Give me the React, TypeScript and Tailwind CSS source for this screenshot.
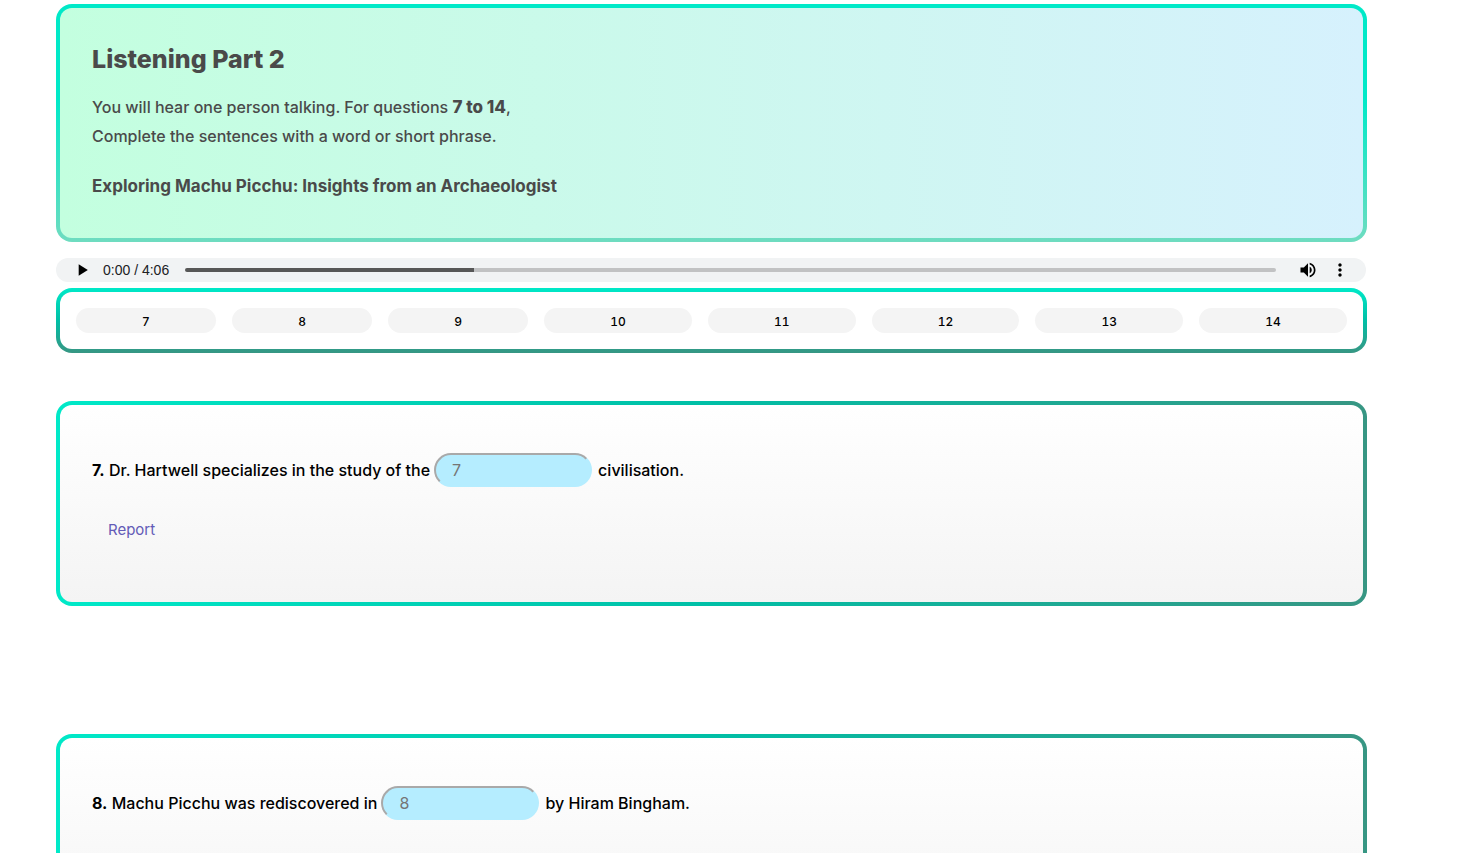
interface Question {
    number: number;
    before: string;
    after: string;
}

const QUESTION_NUMBERS = [7, 8, 9, 10, 11, 12, 13, 14];

const QUESTIONS: Question[] = [
    { number: 7, before: 'Dr. Hartwell specializes in the study of the', after: 'civilisation.' },
    { number: 8, before: 'Machu Picchu was rediscovered in', after: 'by Hiram Bingham.' },
];

function IntroPanel() {
    return (
        <header className="rounded-2xl border-4 border-transparent px-8 pt-[33px] pb-[37px] text-[#4a4a4a] [background:linear-gradient(90deg,#c3ffdf,#d6f1fd)_padding-box,linear-gradient(180deg,#00e9c8_40%,#6fdcc0_100%)_border-box]">
            <h1 className="text-[25px] leading-9 font-extrabold">Listening Part 2</h1>
            <p className="mt-4 leading-[29px] font-medium">
                You will hear one person talking. For questions{' '}
                <strong className="text-[17px] font-extrabold">7 to 14</strong>,
                <br />
                Complete the sentences with a word or short phrase.
            </p>
            <h2 className="mt-[21px] text-[17px] leading-[29px] font-bold">
                Exploring Machu Picchu: Insights from an Archaeologist
            </h2>
        </header>
    );
}

function AudioPlayer() {
    return (
        <div className="mt-4 mr-px flex h-6 items-center rounded-full bg-[#f1f3f4] px-4 font-['Liberation_Sans',sans-serif]">
            <button type="button" aria-label="Play" className="flex size-5 items-center justify-center">
                <svg viewBox="0 0 24 24" className="size-5" fill="#000">
                    <path d="M8 5v14l11-7z" />
                </svg>
            </button>
            <span className="ml-[11px] text-sm text-[#202124]">0:00 / 4:06</span>
            <input
                type="range"
                aria-label="Seek"
                min={0}
                max={246}
                defaultValue={0}
                className="ml-4 h-1 min-w-0 flex-1 appearance-none rounded-full bg-[linear-gradient(90deg,#575757_26.5%,#c1c2c3_26.5%)] [&::-webkit-slider-thumb]:appearance-none"
            />
            <button type="button" aria-label="Mute" className="ml-[22px] flex size-5 items-center justify-center">
                <svg viewBox="0 0 24 24" className="size-5" fill="#000">
                    <path d="M3 9v6h4l5 5V4L7 9H3zm13.5 3c0-1.77-1.02-3.29-2.5-4.03v8.05c1.48-.73 2.5-2.25 2.5-4.02zM14 3.23v2.06c2.89.86 5 3.54 5 6.71s-2.11 5.85-5 6.71v2.06c4.01-.91 7-4.49 7-8.77s-2.99-7.86-7-8.77z" />
                </svg>
            </button>
            <button type="button" aria-label="More options" className="ml-3 flex size-5 items-center justify-center">
                <svg viewBox="0 0 24 24" className="size-5" fill="#000">
                    <path d="M12 8c1.1 0 2-.9 2-2s-.9-2-2-2-2 .9-2 2 .9 2 2 2zm0 2c-1.1 0-2 .9-2 2s.9 2 2 2 2-.9 2-2-.9-2-2-2zm0 6c-1.1 0-2 .9-2 2s.9 2 2 2 2-.9 2-2-.9-2-2-2z" />
                </svg>
            </button>
        </div>
    );
}

function QuestionNav() {
    return (
        <nav className="mt-[6px] flex gap-4 rounded-2xl border-4 border-transparent p-4 [background:linear-gradient(#fff,#fff)_padding-box,linear-gradient(180deg,#00e9c8,#00bfa6_50%,#379683)_border-box]">
            {QUESTION_NUMBERS.map((number) => (
                <button
                    key={number}
                    type="button"
                    className="h-[25px] flex-auto rounded-full bg-[#f4f4f4] pt-[2px] text-xs font-medium text-black tabular-nums"
                >
                    {number}
                </button>
            ))}
        </nav>
    );
}

function QuestionCard({ number, before, after }: Question) {
    const inputId = `answer-${number}`;

    return (
        <section className="rounded-2xl border-4 border-transparent px-8 pt-12 pb-[61px] font-medium text-black [background:linear-gradient(180deg,#fff,#f4f4f4)_padding-box,linear-gradient(90deg,#00e9c8,#00bfa6_50%,#379683)_border-box]">
            <div className="flex items-center">
                <label htmlFor={inputId}>
                    <strong>{number}.</strong> {before}
                </label>
                <input
                    id={inputId}
                    type="text"
                    placeholder={String(number)}
                    className="mr-[6px] ml-1 h-[34px] w-[158px] rounded-full border-2 border-transparent border-t-[#a9a9a9] border-l-[#a9a9a9] bg-[#b5edff] px-4 font-normal placeholder:text-[#757575]"
                />
                <span>{after}</span>
            </div>
            <button type="button" className="mt-8 ml-4 block text-[15px] leading-[22px] font-normal text-[#635bb7]">
                Report
            </button>
        </section>
    );
}

export default function App() {
    return (
        <main className="min-h-screen bg-white pt-1 pr-[97px] pl-14 font-['Inter','Liberation_Sans',sans-serif]">
            <IntroPanel />
            <AudioPlayer />
            <QuestionNav />
            <div className="mt-12 flex flex-col gap-32 pb-32">
                {QUESTIONS.map((question) => (
                    <QuestionCard key={question.number} {...question} />
                ))}
            </div>
        </main>
    );
}
